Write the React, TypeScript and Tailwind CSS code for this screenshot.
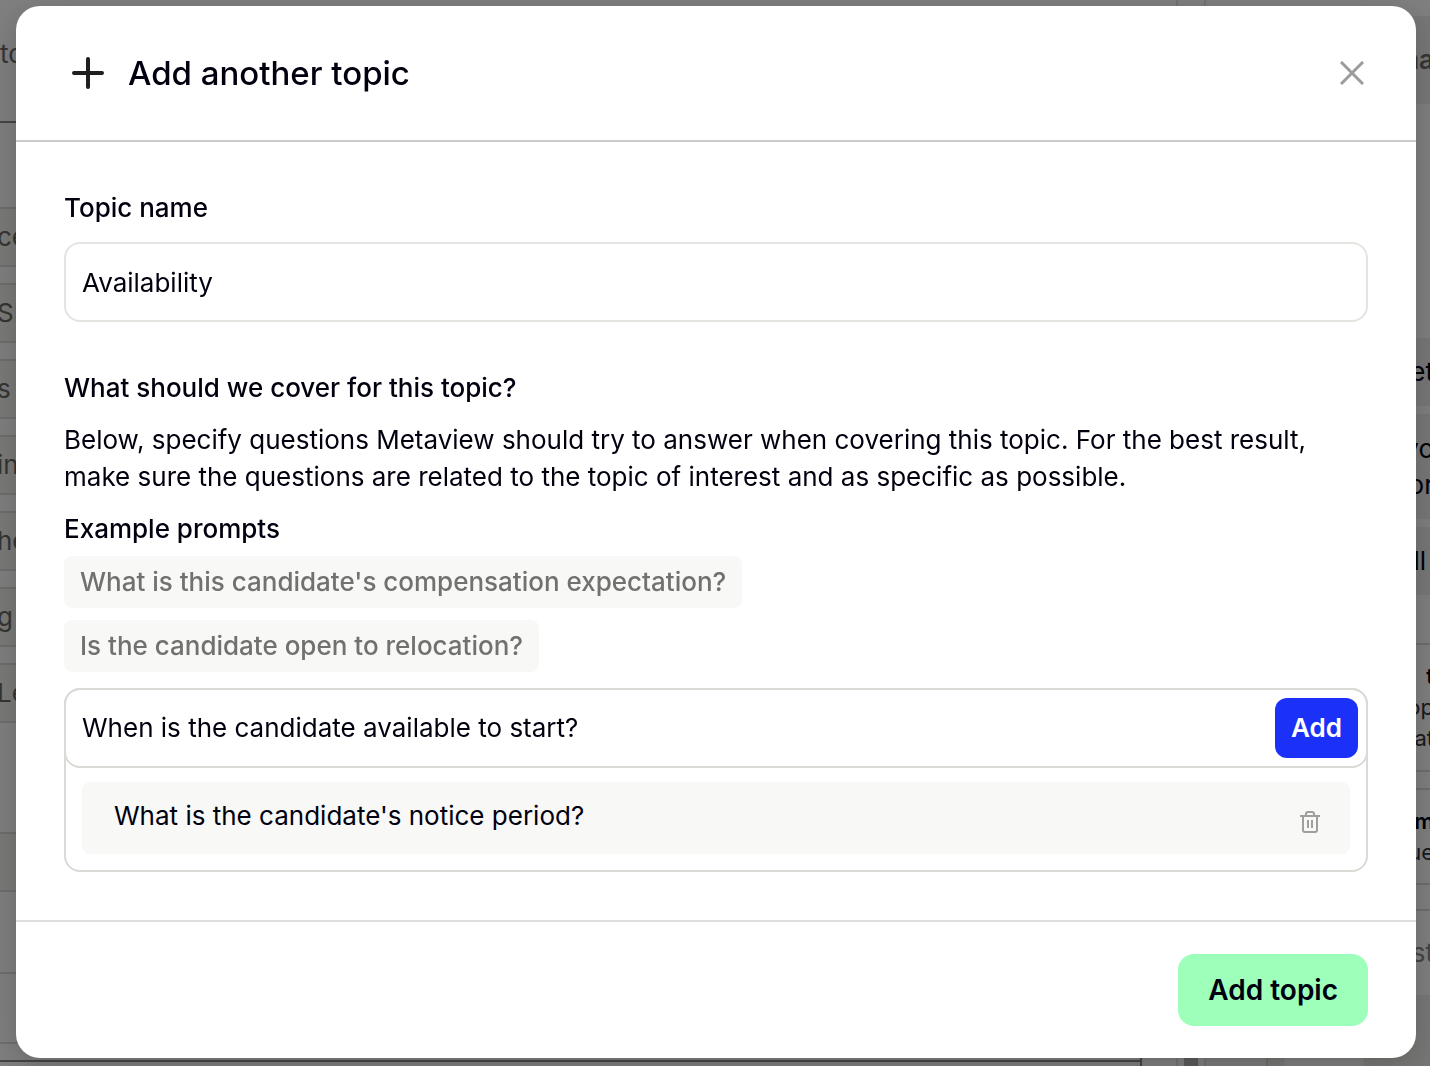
import React from 'react';

const FONT = "font-['Inter','Liberation_Sans',sans-serif]";

// Icons
const PlusIcon = () => (
    <svg className="size-8" viewBox="0 0 32 32" fill="none" stroke="#1f1f1f" strokeWidth="4" strokeLinecap="round" aria-hidden="true">
        <path d="M16 2v28" />
        <path d="M2 16h28" />
    </svg>
);

const CloseIcon = () => (
    <svg className="size-6" viewBox="0 0 24 24" fill="none" stroke="#9b9b9b" strokeWidth="3" aria-hidden="true">
        <path d="M1 1l22 22M23 1L1 23" />
    </svg>
);

const TrashIcon = () => (
    <svg className="size-6" viewBox="0 0 24 24" fill="none" stroke="#9f9f9d" strokeWidth="2" strokeLinejoin="round" aria-hidden="true">
        <path d="M2 6h20" />
        <path d="M5 6v14a2 2 0 0 0 2 2h10a2 2 0 0 0 2-2V6" />
        <path d="M8 6V4a2 2 0 0 1 2-2h4a2 2 0 0 1 2 2v2" />
        <path d="M10 10v8M14 10v8" />
    </svg>
);

// Page behind the dialog
const topics = ['ce', 'SI', 's', 'in', 'he', 'g', 'Le'];

const PageBehind = () => (
    <div className="flex h-screen overflow-hidden bg-white text-[26px] leading-9 text-[#6b6b68]" aria-hidden="true">
        <div className="flex flex-1 flex-col">
            <div className="h-[123px] shrink-0 border-b-2 border-[#8a8a8a] pt-9">to</div>
            <div className="mt-[84px] -ml-[3px] flex flex-col gap-4">
                {topics.map((topic) => (
                    <div key={topic} className="h-[60px] border-y-2 border-[#dcdcda] bg-[#f4f4f0] pt-2.5">{topic}</div>
                ))}
            </div>
            <div className="mt-[109px] h-[60px] shrink-0 border-y-2 border-[#dcdcda] bg-[#f4f4f0]" />
            <div className="h-[82px] shrink-0 border-b-2 border-[#dcdcda]" />
            <div className="h-[70px] shrink-0 border-b-2 border-[#dcdcda]" />
            <div className="h-[18px] shrink-0 border-r-2 border-b-2 border-[#8a8a8a]" />
            <div className="flex-1 border-r-2 border-[#8a8a8a]" />
        </div>
        {/* Scroll track */}
        <div className="ml-[34px] flex w-[30px] shrink-0 items-end border-x-2 border-gray-200 px-1.5">
            <div className="h-40 w-4 bg-[#b8b8b8]" />
        </div>
        <div className="-mr-1 flex w-[228px] shrink-0 flex-col">
            <div className="mt-4 flex h-[88px] shrink-0 items-center justify-end bg-[#efefef] font-semibold">ma</div>
            <div className="mt-[234px] flex h-[68px] shrink-0 items-center justify-end bg-[#efefef] text-[#00000f]">et</div>
            <div className="mt-2 flex h-[105px] shrink-0 flex-col items-end justify-center bg-[#efefef] text-[#00000f]">
                <span>yo</span>
                <span>or</span>
            </div>
            <div className="mt-2 flex h-[68px] shrink-0 items-center justify-end bg-[#efefef] pr-2 text-[#00000f]">ll</div>
            <div className="mt-12 flex h-[129px] shrink-0 flex-col items-end border-y-2 border-[#dcdcda] pt-4 text-[22px] leading-[31px] text-[#33333f]">
                <span className="font-semibold text-[#00000f]">t</span>
                <span>op</span>
                <span>at</span>
            </div>
            <div className="mt-4 flex h-[97px] shrink-0 flex-col items-end border-y-2 border-[#dcdcda] pt-4 text-[22px] leading-[31px] text-[#33333f]">
                <span className="font-semibold text-[#00000f]">m</span>
                <span>ue</span>
            </div>
            <div className="mt-6 flex h-[86px] shrink-0 items-center justify-end border-t-2 border-[#dcdcda] text-[#8a8a88]">st</div>
            <div className="flex h-[71px] shrink-0">
                <div className="w-[62px] border-r-2 border-[#dcdcda] bg-[#f6f6f6]" />
                <div className="flex-1 bg-[#efefec] pt-[60px] pl-4">
                    <div className="h-4 w-20 rounded-full bg-white" />
                </div>
            </div>
        </div>
    </div>
);

// Example prompt chip
const PromptChip = ({ children }: { children: React.ReactNode }) => (
    <li className="rounded-lg bg-[#f8f8f7] px-4 py-2 font-medium text-[#71716d]">{children}</li>
);

export default function App() {
    const [name, setName] = React.useState('Availability');
    const [question, setQuestion] = React.useState('When is the candidate available to start?');
    const [questions, setQuestions] = React.useState(["What is the candidate's notice period?"]);

    const addQuestion = () => {
        if (!question.trim()) return;
        setQuestions([...questions, question.trim()]);
        setQuestion('');
    };

    return (
        <div className={FONT}>
            <PageBehind />
            <div className="fixed inset-0 overflow-y-auto bg-black/50 pt-1.5 pr-3.5 pb-2 pl-4">
                <div role="dialog" aria-modal="true" aria-labelledby="dialog-title" className="rounded-3xl bg-white text-[26px] leading-9 text-[#00000f] shadow-[0_8px_32px_rgba(0,0,0,0.2)]">
                    <header className="flex items-center gap-6 border-b-2 border-[#cacaca] py-[47px] pr-[52px] pl-14">
                        <PlusIcon />
                        <h2 id="dialog-title" className="flex-1 text-[33px] leading-10 font-medium">Add another topic</h2>
                        <button type="button" aria-label="Close">
                            <CloseIcon />
                        </button>
                    </header>

                    <div className="p-12">
                        <label htmlFor="topic-name" className="block font-medium">Topic name</label>
                        <input
                            id="topic-name"
                            value={name}
                            onChange={(e) => setName(e.target.value)}
                            className="mt-4 block h-20 w-full rounded-2xl border-2 border-[#e4e4e0] px-4 outline-none"
                        />

                        <h3 className="mt-12 font-medium">
                            <label htmlFor="question">What should we cover for this topic?</label>
                        </h3>
                        <p className="mt-[15px] leading-[37px]">
                            Below, specify questions Metaview should try to answer when covering this topic. For the best result, make sure the questions are related to the topic of interest and as specific as possible.
                        </p>

                        <h4 className="mt-4 font-medium">Example prompts</h4>
                        <ul className="mt-[9px] flex flex-col items-start gap-3">
                            <PromptChip>What is this candidate's compensation expectation?</PromptChip>
                            <PromptChip>Is the candidate open to relocation?</PromptChip>
                        </ul>

                        <div className="mt-4 rounded-2xl border-2 border-[#dadad6]">
                            <div className="-m-0.5 flex h-20 items-center rounded-2xl border-2 border-[#dadad6] pr-2 pl-4">
                                <input
                                    id="question"
                                    value={question}
                                    onChange={(e) => setQuestion(e.target.value)}
                                    className="min-w-0 flex-1 outline-none"
                                />
                                <button type="button" onClick={addQuestion} className="h-15 rounded-xl bg-[#1b31f7] px-4 font-semibold text-white">Add</button>
                            </div>
                            <ul className="flex flex-col gap-2 p-4">
                                {questions.map((q) => (
                                    <li key={q} className="flex h-18 rounded-lg bg-[#f8f8f7] py-4 pr-6 pl-8">
                                        <span className="flex-1">{q}</span>
                                        <button
                                            type="button"
                                            aria-label="Delete question"
                                            onClick={() => setQuestions(questions.filter((item) => item !== q))}
                                            className="flex size-8 items-center justify-center self-end"
                                        >
                                            <TrashIcon />
                                        </button>
                                    </li>
                                ))}
                            </ul>
                        </div>
                    </div>

                    <footer className="flex justify-end border-t-2 border-[#dedede] px-12 py-8">
                        <button type="button" className="h-18 rounded-2xl bg-[#9effba] px-[30px] text-[28px] font-semibold">Add topic</button>
                    </footer>
                </div>
            </div>
        </div>
    );
}
